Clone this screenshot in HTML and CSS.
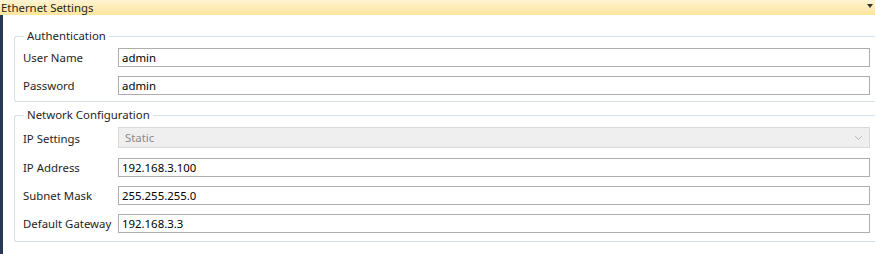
FILE: index.html
```html
<!DOCTYPE html>
<html lang="en">
<head>
<meta charset="UTF-8">
<title>Ethernet Settings</title>
<link rel="stylesheet" href="styles.css">
</head>
<body>

<div class="title-bar">
    <span>Ethernet Settings</span>
    <span class="pin"></span>
</div>

<div class="panel">
    <fieldset class="group">
        <legend>Authentication</legend>
        <label>User Name</label>
        <input type="text" class="field" value="admin">
        <label>Password</label>
        <input type="text" class="field" value="admin">
    </fieldset>

    <fieldset class="group network">
        <legend>Network Configuration</legend>
        <label>IP Settings</label>
        <div class="combo">
            <span>Static</span>
            <svg width="9" height="6" viewBox="0 0 9 6"><path d="M1 1 L4.5 4.5 L8 1" fill="none" stroke="#b8b8b8" stroke-width="1"/></svg>
        </div>
        <label>IP Address</label>
        <input type="text" class="field" value="192.168.3.100">
        <label>Subnet Mask</label>
        <input type="text" class="field" value="255.255.255.0">
        <label>Default Gateway</label>
        <input type="text" class="field" value="192.168.3.3">
    </fieldset>
</div>

</body>
</html>
```

FILE: styles.css
```css
body {
    margin: 0;
    padding: 0;
    background-color: #fff;
    font-family: "Noto Sans", "Open Sans", sans-serif;
    font-size: 11.4px;
    color: #1e1e1e;
    overflow: hidden;
}

.title-bar {
    height: 15px;
    display: flex;
    align-items: center;
    justify-content: space-between;
    padding-left: 1px;
    background: linear-gradient(#fff4d2, #fde59c);
    color: #1e1e1e;
    line-height: 15px;
}

.pin {
    width: 0;
    height: 0;
    margin-right: 2px;
    margin-top: -4px;
    border-left: 3px solid transparent;
    border-right: 3px solid transparent;
    border-top: 4px solid #333;
}

.panel {
    border-left: 3px solid #293955;
    height: 239px;
    padding: 14px 0 0 11px;
    box-sizing: border-box;
}

.group {
    display: grid;
    grid-template-columns: 95px 752px;
    row-gap: 9px;
    align-items: center;
    margin: 0 0 6px 0;
    padding: 5px 0 6px 8px;
    border: 1px solid #d5dfe5;
    border-right: none;
    border-radius: 3px 0 0 3px;
    min-width: 0;
}

.group.network {
    padding-bottom: 8px;
}

.group legend {
    padding: 0 3px;
    margin-left: 1px;
    line-height: 14px;
}

.group label {
    white-space: nowrap;
}

.field {
    height: 19px;
    box-sizing: border-box;
    margin: 0;
    padding: 0 3px;
    border: 1px solid #abadb3;
    font-family: inherit;
    font-size: 11.4px;
    color: #000;
    outline: none;
}

.combo {
    height: 21px;
    box-sizing: border-box;
    display: flex;
    align-items: center;
    justify-content: space-between;
    padding: 0 6px 0 6px;
    margin-bottom: 1px;
    background-color: #efefef;
    border: 1px solid #d9d9d9;
    color: #8a8a8a;
}
```
